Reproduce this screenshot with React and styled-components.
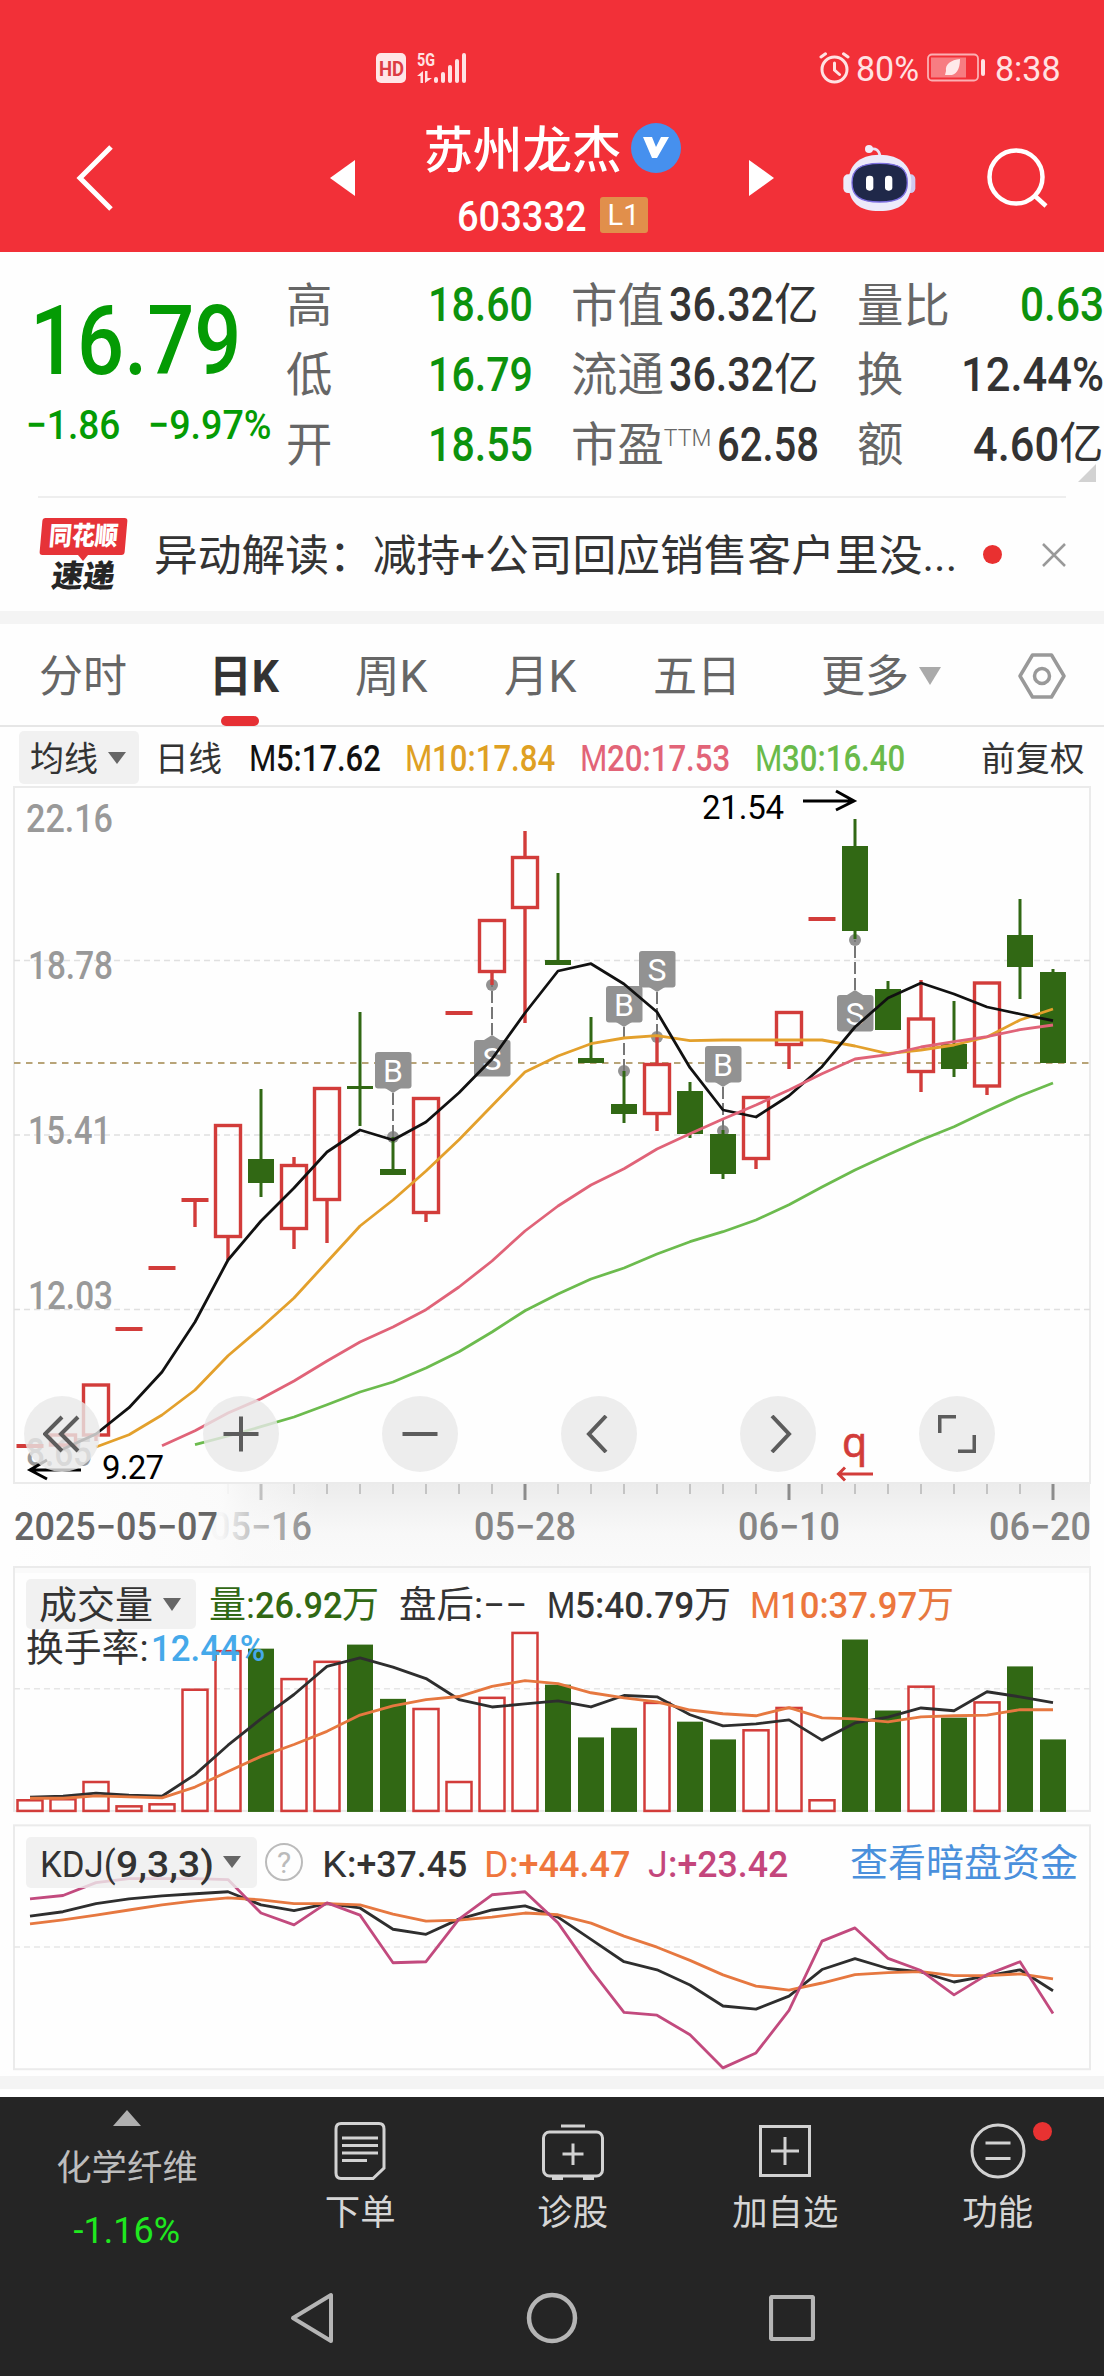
import React, { useLayoutEffect, useRef, useState } from "react";
import styled, { createGlobalStyle } from "styled-components";

const GlobalStyle = createGlobalStyle`
  * {
    box-sizing: border-box;
  }
  body {
    margin: 0;
    background-color: #fefefe;
    font-family: Roboto, "Noto Sans CJK SC", sans-serif;
    color: #333;
  }
  svg {
    display: block;
    flex-shrink: 0;
  }
`;

const RED = "#d23c3a";
const GREEN = "#316814";
const FONT = 'Roboto, "Noto Sans CJK SC", sans-serif';

/* ---------- condensed text ---------- */

const FitBox = styled.span`
  display: inline-block;
  flex-shrink: 0;
  width: ${(p) => p.$w}px;
  margin-left: ${(p) => p.$ml || 0}px;
  padding-top: 4px;
  font-size: ${(p) => p.$size}px;
  font-weight: ${(p) => p.$weight || 400};
  color: ${(p) => p.$color || "inherit"};
  line-height: 1.2;
  white-space: pre;
`;

const FitText = styled.span`
  display: inline-block;
  transform-origin: left center;
`;

// squeezes the text horizontally to the given width
const Fit = ({ w, ml, size, weight, color, children }) => {
  const ref = useRef(null);
  const [scale, setScale] = useState(1);
  useLayoutEffect(() => {
    setScale(w / ref.current.offsetWidth);
  }, [w, children]);
  return (
    <FitBox $w={w} $ml={ml} $size={size} $weight={weight} $color={color}>
      <FitText ref={ref} style={{ transform: `scaleX(${scale})` }}>
        {children}
      </FitText>
    </FitBox>
  );
};

/* ---------- header ---------- */

const Page = styled.div`
  width: 1104px;
  height: 2376px;
  overflow: hidden;
  display: flex;
  flex-direction: column;
`;

const Header = styled.header`
  height: 252px;
  flex-shrink: 0;
  background-color: #f23038;
  color: white;
`;

const StatusBar = styled.div`
  height: 96px;
  padding: 40px 43px 0 376px;
  display: flex;
  align-items: center;
  color: #ffe2e3;
`;

const HdBadge = styled.div`
  width: 30px;
  height: 30px;
  padding-bottom: 3px;
  border-radius: 5px;
  background-color: #ffe6e7;
  color: #dd3c43;
  display: flex;
  align-items: center;
  justify-content: center;
`;

const Signal = styled.svg`
  margin-left: 10px;
  overflow: visible;
`;

const StatusRight = styled.div`
  margin-left: auto;
  display: flex;
  align-items: center;
`;

const NavBar = styled.div`
  height: 156px;
  padding: 7px 0 0 75px;
  display: flex;
  align-items: center;
`;

const Spacer = styled.div`
  width: ${(p) => p.$w}px;
  flex-shrink: 0;
`;

const TitleBlock = styled.div`
  width: 258px;
  height: 110px;
  display: flex;
  flex-direction: column;
  align-items: center;
  justify-content: space-between;
`;

const TitleRow = styled.div`
  display: flex;
  align-items: center;
  height: ${(p) => p.$h}px;
`;

const StockName = styled.h1`
  margin: 0;
  padding-top: 7px;
  font-size: 49.5px;
  font-weight: 500;
  line-height: 50px;
`;

const Verified = styled.span`
  width: 50px;
  height: 50px;
  margin-left: 9px;
  border-radius: 50%;
  background-color: #4690ee;
  display: flex;
  align-items: center;
  justify-content: center;
`;

const Level = styled.span`
  width: 48px;
  height: 36px;
  margin-left: 13px;
  border-radius: 3px;
  background-color: #e18f4b;
  display: flex;
  align-items: center;
  justify-content: center;
  font-size: 29px;
`;

const Robot = () => (
  <svg width="73" height="68" viewBox="131 309 219 204">
    <path
      d="M212 325 Q238 318 242 345"
      stroke="#e9e2f6"
      strokeWidth="8"
      fill="none"
    />
    <circle cx="209" cy="324" r="12" fill="#f2ecfa" />
    <rect x="132" y="400" width="40" height="56" rx="14" fill="#eeebfa" />
    <rect x="308" y="400" width="40" height="56" rx="14" fill="#cfc9ef" />
    <path
      d="M240 341 C305 341 336 375 336 425 C336 485 300 510 240 510 C180 510 147 485 147 425 C147 375 178 341 240 341 Z"
      fill="#eceafa"
    />
    <path
      d="M241 367 C305 367 324 385 324 425 C324 465 300 483 241 483 C182 483 158 465 158 425 C158 385 182 367 241 367 Z"
      fill="#1f2849"
      stroke="#7c6fe0"
      strokeWidth="4"
    />
    <rect x="200" y="404" width="22" height="45" rx="10" fill="#fff" />
    <rect x="257" y="404" width="22" height="45" rx="10" fill="#fff" />
  </svg>
);

const TopHeader = () => (
  <Header>
    <StatusBar>
      <HdBadge>
        <Fit w={25} size={20} weight={700}>
          HD
        </Fit>
      </HdBadge>
      <Signal width="53" height="32" viewBox="-1 0 53 32" fill="#ffe2e3">
        <text
          x="0"
          y="14"
          fontSize="18"
          fontWeight="700"
          fontFamily="Roboto"
          textLength="18"
          lengthAdjust="spacingAndGlyphs"
        >
          5G
        </text>
        <path d="M0 24 L6 19 V31 H3.5 V24 Z M8 19 H10.500 V26 H15 L8 31 Z" />
        <rect x="17" y="25" width="4" height="6" rx="2" />
        <rect x="24" y="20" width="4" height="11" rx="2" />
        <rect x="31" y="13" width="4" height="18" rx="2" />
        <rect x="38" y="7" width="4" height="24" rx="2" />
        <rect x="45" y="1" width="4" height="30" rx="2" />
      </Signal>
      <StatusRight>
        <svg
          width="32"
          height="32"
          viewBox="0 0 32 32"
          fill="none"
          stroke="#ffe2e3"
          strokeWidth="3"
          strokeLinecap="round"
        >
          <circle cx="15.500" cy="17.500" r="12.500" />
          <path d="M15.500 11 V18 L20.500 22.500 M2 5 L6.500 1.800 M29 5 L24.500 1.800" />
        </svg>
        <Fit ml={5} w={63} size={34.500}>
          80%
        </Fit>
        <Spacer $w={8} />
        <svg width="60" height="30" viewBox="0 0 60 30">
          <rect
            x="1"
            y="1.500"
            width="50"
            height="26"
            rx="4"
            fill="none"
            stroke="#fbb0b3"
            strokeWidth="1.800"
          />
          <rect x="4" y="4.500" width="35" height="20" fill="#f77d82" />
          <path
            d="M33 6 C24 7 18 11 19 18 L18 22 L21 22 C28 23 33 18 33 6 Z"
            fill="#ffe9ea"
          />
          <rect x="54" y="6" width="4" height="17" rx="2" fill="#ffe2e3" />
        </svg>
        <Fit ml={8} w={66} size={34.500}>
          8:38
        </Fit>
      </StatusRight>
    </StatusBar>
    <NavBar>
      <svg width="40" height="68" viewBox="0 0 40 68">
        <path
          d="M36 3 L5 34 L36 65"
          fill="none"
          stroke="#fff"
          strokeWidth="5"
        />
      </svg>
      <Spacer $w={215} />
      <svg width="25" height="36" viewBox="0 0 25 36">
        <path d="M25 0 V36 L0 18 Z" fill="#fff" />
      </svg>
      <Spacer $w={68} />
      <TitleBlock>
        <TitleRow $h={50}>
          <StockName>苏州龙杰</StockName>
          <Verified>
            <svg width="28" height="22" viewBox="0 0 28 22">
              <path
                d="M1 0 H10 L14 10 L19 0 H27 L15 21 H10 Z"
                fill="#fff"
              />
            </svg>
          </Verified>
        </TitleRow>
        <TitleRow $h={36}>
          <Fit w={130} size={43} weight={500}>
            603332
          </Fit>
          <Level>L1</Level>
        </TitleRow>
      </TitleBlock>
      <Spacer $w={68} />
      <svg width="25" height="36" viewBox="0 0 25 36">
        <path d="M0 0 V36 L25 18 Z" fill="#fff" />
      </svg>
      <Spacer $w={69} />
      <Robot />
      <Spacer $w={71} />
      <svg width="62" height="60" viewBox="0 0 62 60">
        <circle
          cx="29"
          cy="29"
          r="26.500"
          fill="none"
          stroke="#fff"
          strokeWidth="4.500"
        />
        <path d="M48 48 L59 58" stroke="#fff" strokeWidth="4.500" />
      </svg>
    </NavBar>
  </Header>
);

/* ---------- quote ---------- */

const Quote = styled.section`
  height: 244px;
  flex-shrink: 0;
  display: flex;
  position: relative;
`;

const PriceBlock = styled.div`
  width: 286px;
  flex-shrink: 0;
  padding-top: 28px;
  color: #049b04;
`;

const PriceRow = styled.div`
  display: flex;
  align-items: center;
  height: ${(p) => p.$h}px;
`;

const Stats = styled.div`
  flex: 1;
  padding-top: 17px;
  display: grid;
  grid-template-columns: 247px 248px 247px;
  grid-auto-rows: 69.6px;
  column-gap: 38px;
`;

const Stat = styled.div`
  display: flex;
  align-items: center;
  color: #333;
  font-size: 46.4px;
  line-height: 60px;
`;

const StatLabel = styled.span`
  margin-right: auto;
  padding-top: 4px;
  color: #666;
  white-space: nowrap;
`;

const Ttm = styled.sup`
  font-size: 23px;
  font-weight: 300;
  line-height: 0;
  vertical-align: 15px;
`;

const Unit = styled.span`
  width: 45px;
  padding-top: 3px;
  font-size: 44.5px;
`;

const Corner = styled.svg`
  position: absolute;
  right: 8px;
  bottom: 14px;
`;

const UP = "#0d920d";
const stats = [
  { label: "高", value: "18.60", w: 105, color: UP },
  { label: "市值", value: "36.32", w: 105, unit: "亿" },
  { label: "量比", value: "0.63", w: 84, color: UP },
  { label: "低", value: "16.79", w: 105, color: UP },
  { label: "流通", value: "36.32", w: 105, unit: "亿" },
  { label: "换", value: "12.44%", w: 143 },
  { label: "开", value: "18.55", w: 105, color: UP },
  { label: "市盈", ttm: true, value: "62.58", w: 102 },
  { label: "额", value: "4.60", w: 86, unit: "亿" },
];

const Divider = styled.div`
  height: 2px;
  flex-shrink: 0;
  margin: 0 38px;
  background-color: #eeeeee;
`;

const QuotePanel = () => (
  <Quote>
    <PriceBlock>
      <PriceRow $h={118}>
        <Fit ml={30} w={211} size={97} weight={500}>
          16.79
        </Fit>
      </PriceRow>
      <PriceRow $h={52}>
        <Fit ml={26} w={94} size={41} weight={500}>
          −1.86
        </Fit>
        <Fit ml={28} w={124} size={41} weight={500}>
          −9.97%
        </Fit>
      </PriceRow>
    </PriceBlock>
    <Stats>
      {stats.map((s) => (
        <Stat key={s.label}>
          <StatLabel>
            {s.label}
            {s.ttm && <Ttm>TTM</Ttm>}
          </StatLabel>
          <Fit w={s.w} size={49} weight={500} color={s.color}>
            {s.value}
          </Fit>
          {s.unit && <Unit>{s.unit}</Unit>}
        </Stat>
      ))}
    </Stats>
    <Corner width="18" height="18" viewBox="0 0 18 18">
      <path d="M18 0 V18 H0 Z" fill="#d2d2d2" />
    </Corner>
  </Quote>
);

/* ---------- news ---------- */

const News = styled.section`
  height: 113px;
  flex-shrink: 0;
  padding-left: 39px;
  display: flex;
  align-items: center;
`;

const Logo = styled.div`
  width: 88px;
  height: 74px;
  display: flex;
  flex-direction: column;
  align-items: center;
`;

const LogoTag = styled.div`
  width: 85px;
  height: 37px;
  padding-bottom: 3px;
  border-radius: 3px;
  background-color: #e63338;
  color: white;
  transform: skewX(-5deg);
  display: flex;
  align-items: center;
  justify-content: center;
`;

const LogoTip = styled.div`
  border: 5px solid transparent;
  border-top: 6px solid #e63338;
  border-bottom: 0;
`;

const LogoSub = styled.div`
  height: 31px;
  padding-bottom: 4px;
  display: flex;
  align-items: center;
  transform: skewX(-8deg);
  color: #262626;
`;

const NewsText = styled.div`
  width: 801px;
  margin-left: 27px;
  padding-top: 2px;
  font-size: 43.75px;
  line-height: 60px;
  color: #333;
  white-space: nowrap;
`;

const RedDot = styled.span`
  width: 19px;
  height: 19px;
  border-radius: 50%;
  background-color: #e93030;
`;

const Band = styled.div`
  height: 13px;
  flex-shrink: 0;
  background-color: #f4f4f4;
`;

const NewsBar = () => (
  <News>
    <Logo>
      <LogoTag>
        <Fit w={69} size={26} weight={900}>
          同花顺
        </Fit>
      </LogoTag>
      <LogoTip />
      <LogoSub>
        <Fit w={63} size={31} weight={900}>
          速递
        </Fit>
      </LogoSub>
    </Logo>
    <NewsText>异动解读：减持+公司回应销售客户里没...</NewsText>
    <Spacer $w={28} />
    <RedDot />
    <Spacer $w={40} />
    <svg width="24" height="24" viewBox="0 0 24 24">
      <path
        d="M1 1 L23 23 M23 1 L1 23"
        stroke="#999"
        strokeWidth="2.500"
        fill="none"
      />
    </svg>
  </News>
);

/* ---------- tabs ---------- */

const Tabs = styled.nav`
  height: 103px;
  flex-shrink: 0;
  padding-left: 39px;
  border-bottom: 2px solid #e6e6e6;
  display: flex;
`;

const Tab = styled.div`
  position: relative;
  height: 101px;
  margin-left: ${(p) => p.$ml || 0}px;
  display: flex;
  align-items: center;
  padding-top: 2px;
  font-size: 44px;
  line-height: 1.2;
  color: ${(p) => (p.$active ? "#333" : "#666")};
  font-weight: ${(p) => (p.$active ? 700 : 400)};
`;

const TabText = styled.span`
  padding-top: 4px;
`;

const TabMark = styled.span`
  position: absolute;
  left: 12px;
  bottom: -1px;
  width: 38px;
  height: 10px;
  border-radius: 5px;
  background-color: #e63034;
`;

const Caret = styled.span`
  border: ${(p) => p.$s}px solid transparent;
  border-top: ${(p) => p.$h}px solid ${(p) => p.$color || "#666"};
  border-bottom: 0;
  margin-left: ${(p) => p.$ml || 0}px;
`;

const TabBar = () => (
  <Tabs>
    <Tab>
      <TabText>分时</TabText>
    </Tab>
    <Tab $ml={82} $active>
      <Fit w={70} size={44} weight={700}>
        日K
      </Fit>
      <TabMark />
    </Tab>
    <Tab $ml={76}>
      <Fit w={73} size={44}>
        周K
      </Fit>
    </Tab>
    <Tab $ml={76}>
      <Fit w={73} size={44}>
        月K
      </Fit>
    </Tab>
    <Tab $ml={76}>
      <TabText>五日</TabText>
    </Tab>
    <Tab $ml={80}>
      <TabText>更多</TabText>
      <Caret $s={11} $h={18} $ml={10} $color="#aaa" />
    </Tab>
    <Tab $ml={77}>
      <svg
        width="48"
        height="46"
        viewBox="0 0 48 46"
        fill="none"
        stroke="#999"
        strokeWidth="3.500"
      >
        <path
          d="M14.500 2 H33.500 L46 23 L33.500 44 H14.500 L2 23 Z"
          strokeLinejoin="round"
        />
        <circle cx="24" cy="23" r="7.500" />
      </svg>
    </Tab>
  </Tabs>
);

/* ---------- indicator rows ---------- */

const MaRow = styled.div`
  height: 59px;
  flex-shrink: 0;
  padding: 2px 0 0 19px;
  display: flex;
  align-items: center;
`;

const Pill = styled.div`
  width: ${(p) => p.$w}px;
  height: ${(p) => p.$h}px;
  padding-left: ${(p) => p.$pl}px;
  border-radius: 5px;
  background-color: rgba(238, 238, 238, 0.8);
  display: flex;
  align-items: center;
`;

// thin letter followed by medium digits
const Figure = ({ ml, lead, leadW = 27, w, size = 36, color, children }) => (
  <>
    <Fit ml={ml} w={leadW} size={size} color={color}>
      {lead}
    </Fit>
    <Fit w={w} size={size} weight={500} color={color}>
      {children}
    </Fit>
  </>
);

const AverageRow = () => (
  <MaRow>
    <Pill $w={120} $h={53} $pl={11}>
      <Fit w={68} size={34.500}>
        均线
      </Fit>
      <Caret $ml={10} $s={9} $h={12} />
    </Pill>
    <Fit ml={16} w={67} size={34.500}>
      日线
    </Fit>
    <Figure ml={27} lead="M" w={105} color="#111">
      5:17.62
    </Figure>
    <Figure ml={24} lead="M" w={123} color="#dfa023">
      10:17.84
    </Figure>
    <Figure ml={25} lead="M" w={123} color="#e26478">
      20:17.53
    </Figure>
    <Figure ml={25} lead="M" w={123} color="#6aba4a">
      30:16.40
    </Figure>
    <Fit ml={76} w={104} size={34.500}>
      前复权
    </Fit>
  </MaRow>
);

/* ---------- candles ---------- */

const cx = (i) => 30 + 33 * i;

// [up, high, bodyTop, bodyBottom, low]
const candles = [
  [1, 1446, 1446, 1446, 1446],
  [1, 1434, 1435, 1445, 1447],
  [1, 1385, 1385, 1435, 1441],
  [1, 1329, 1329, 1329, 1329],
  [1, 1268, 1268, 1268, 1268],
  [1, 1200, 1200, 1200, 1227],
  [1, 1125.5, 1125.5, 1236.5, 1260],
  [0, 1089, 1159, 1183, 1197],
  [1, 1157, 1165.5, 1228.5, 1249],
  [1, 1088.5, 1088.5, 1199.5, 1243],
  [0, 1012, 1086, 1089, 1126],
  [0, 1137, 1169, 1175, 1175],
  [1, 1098.5, 1098.5, 1212.5, 1222],
  [1, 1013, 1013, 1013, 1013],
  [1, 920.5, 920.5, 971.5, 985],
  [1, 831, 857.5, 907.5, 1023],
  [0, 873, 960, 965, 965],
  [0, 1017, 1058, 1063, 1063],
  [0, 1071, 1104, 1114, 1123],
  [1, 1037, 1064.5, 1113.5, 1131],
  [0, 1082, 1091, 1134, 1138],
  [0, 1130, 1134, 1174, 1179],
  [1, 1097.5, 1097.5, 1158.5, 1169],
  [1, 1012.5, 1012.5, 1044.5, 1069],
  [1, 919, 919, 919, 919],
  [0, 819, 846, 931, 939],
  [0, 981, 989, 1030, 1030],
  [1, 980, 1019, 1071.5, 1092],
  [0, 1001, 1044, 1069, 1077],
  [1, 983, 983, 1086, 1095],
  [0, 899, 935, 967, 999],
  [0, 969, 972, 1063, 1063],
];

const averages = [
  {
    color: "#e3a02c",
    from: 2,
    ys: [
      1447, 1434.7, 1415, 1390, 1355.7, 1327.7, 1298, 1262, 1226, 1200, 1171,
      1139.7, 1105.7, 1072, 1056, 1043.7, 1038, 1035.7, 1040.7, 1040, 1040,
      1040, 1040, 1046, 1053.7, 1050, 1045, 1037, 1020, 1009,
    ],
  },
  {
    color: "#111",
    from: 1,
    ys: [
      1449, 1434, 1407.7, 1372, 1322, 1260, 1221, 1188, 1152, 1130, 1140, 1122,
      1092.7, 1059, 1013, 971, 963.7, 984, 1012, 1067.7, 1110, 1117, 1095.7,
      1066.7, 1027, 998, 983, 994, 1007, 1014, 1020.7,
    ],
  },
  {
    color: "#e06378",
    from: 4,
    ys: [
      1445.7, 1430.7, 1413, 1398.7, 1381, 1361, 1342, 1327, 1309.7, 1287, 1261,
      1231, 1206, 1185, 1168.7, 1149, 1133.7, 1119, 1105, 1090, 1073.7, 1059,
      1054.7, 1047, 1041.7, 1036.7, 1029.7, 1025,
    ],
  },
  {
    color: "#6cbb4e",
    from: 5,
    ys: [
      1444.7, 1436, 1426.7, 1417, 1404.7, 1392, 1382, 1368, 1351.7, 1332,
      1310.7, 1294, 1279, 1268, 1254, 1241.7, 1231.7, 1220, 1204.7, 1187, 1170,
      1154.7, 1140, 1126.7, 1111, 1096, 1083,
    ],
  },
];

// box: top of the letter box, dot: y of the price it points to
const trades = [
  { i: 11, side: "B", box: 1052, dot: 1137 },
  { i: 14, side: "S", box: 1040, dot: 985 },
  { i: 18, side: "B", box: 986, dot: 1071 },
  { i: 19, side: "S", box: 951, dot: 1037 },
  { i: 21, side: "B", box: 1046, dot: 1131 },
  { i: 25, side: "S", box: 995, dot: 940 },
];

const Line = ({ from = 0, ys, color, width = 2.8 }) => (
  <polyline
    points={ys.map((y, k) => `${cx(from + k)},${y}`).join(" ")}
    fill="none"
    stroke={color}
    strokeWidth={width}
    strokeLinejoin="round"
  />
);

const Candle = ({ x, data }) => {
  const [up, high, top, bottom, low] = data;
  if (!up) {
    return (
      <g fill={GREEN}>
        <rect x={x - 1.5} y={high} width="3" height={low - high} />
        <rect x={x - 13} y={top} width="26" height={bottom - top} />
      </g>
    );
  }
  return (
    <g stroke={RED} strokeWidth="3.4" fill="none">
      {top === bottom ? (
        <path d={`M${x - 13.5} ${top} H${x + 13.5}`} strokeWidth="4" />
      ) : (
        <rect x={x - 12.5} y={top} width="25" height={bottom - top} />
      )}
      <path d={`M${x} ${high} V${top} M${x} ${bottom} V${low}`} />
    </g>
  );
};

const Trade = ({ i, side, box, dot }) => {
  const x = cx(i);
  const below = box > dot;
  const edge = below ? box : box + 36;
  const tip = below ? box - 5 : box + 41;
  return (
    <g fill="#929292">
      <circle cx={x} cy={dot} r="6" />
      <path
        d={`M${x} ${tip} V${dot}`}
        stroke="#777"
        strokeWidth="2"
        strokeDasharray="12 4"
      />
      <rect x={x - 18} y={box} width="36.500" height="36.500" rx="3" />
      <path d={`M${x - 8} ${edge} L${x} ${tip} L${x + 8} ${edge} Z`} />
      <text
        x={x}
        y={box + 29.5}
        fill="#fff"
        fontSize="32"
        fontFamily="Roboto"
        textAnchor="middle"
      >
        {side}
      </text>
    </g>
  );
};

const AxisText = ({ x, y, w, color = "#999", children }) => (
  <text
    x={x}
    y={y}
    textLength={w}
    lengthAdjust="spacingAndGlyphs"
    fontSize="38"
    fontWeight="500"
    fontFamily={FONT}
    fill={color}
  >
    {children}
  </text>
);

const ChartWrap = styled.div`
  position: relative;
  flex-shrink: 0;
  height: ${(p) => p.$h}px;
`;

const Controls = styled.div`
  position: absolute;
  left: 24px;
  bottom: 12px;
  display: flex;
  gap: 103px;
`;

const RoundButton = styled.button`
  width: 76px;
  height: 76px;
  padding: 0;
  border: none;
  border-radius: 50%;
  background-color: rgba(232, 232, 232, 0.8);
  display: flex;
  align-items: center;
  justify-content: center;
`;

const controls = [
  "M19 2 L2 19 L19 36 M35 2 L18 19 L35 36",
  "M1.500 19 H36.500 M19 1.500 V36.500",
  "M1.500 19 H36.500",
  "M26 1 L9 19 L26 37",
  "M13 1 L30 19 L13 37",
  "M1.500 18 V1.500 H18 M20 36.500 H36.500 V20",
];

const priceLabels = [
  ["22.16", 26, 832, 87],
  ["18.78", 28, 979, 85],
  ["15.41", 28, 1144, 83],
  ["12.03", 28, 1309, 85],
  ["8.65", 26, 1466, 66],
];

const PriceChart = () => (
  <ChartWrap $h={698}>
    <svg width="1104" height="698" viewBox="0 786 1104 698">
      <rect
        x="14"
        y="787"
        width="1076"
        height="696"
        fill="none"
        stroke="#ebebeb"
        strokeWidth="2"
      />
      <path
        d="M14 960.500 H1090 M14 1135 H1090 M14 1309.500 H1090"
        stroke="#e0e0e0"
        strokeWidth="1.300"
        strokeDasharray="6 4"
      />
      <path
        d="M14 1063 H1090"
        stroke="#b8a478"
        strokeWidth="2"
        strokeDasharray="6.500 5.500"
      />
      {priceLabels.map(([t, x, y, w]) => (
        <AxisText key={t} x={x} y={y} w={w}>
          {t}
        </AxisText>
      ))}
      {trades.map((t) => (
        <Trade key={t.i} {...t} />
      ))}
      {candles.map((c, i) => (
        <Candle key={i} x={cx(i)} data={c} />
      ))}
      {averages.map((a) => (
        <Line key={a.color} {...a} />
      ))}
      <g fontFamily="Roboto" fontSize="33" fill="#000">
        <text x="702" y="819" textLength="82">
          21.54
        </text>
        <text x="102" y="1479" textLength="62">
          9.27
        </text>
      </g>
      <path
        d="M803 801 H853 M836 791 L854 801 L836 810 M30 1470 H81 M47 1460 L30 1470 L47 1479"
        stroke="#000"
        strokeWidth="3"
        fill="none"
      />
      <text
        x="842"
        y="1457"
        fontSize="41"
        fontFamily="Noto Sans"
        fill={RED}
        stroke={RED}
        strokeWidth="0.6"
      >
        q
      </text>
      <path
        d="M873 1474 H839 M845 1467.500 L838.500 1474 L845 1480.500"
        stroke={RED}
        strokeWidth="3"
        fill="none"
      />
    </svg>
    <Controls>
      {controls.map((d) => (
        <RoundButton key={d}>
          <svg width="38" height="38" viewBox="0 0 38 38">
            <path d={d} fill="none" stroke="#5c5c5c" strokeWidth="4" />
          </svg>
        </RoundButton>
      ))}
    </Controls>
  </ChartWrap>
);

const ticks = Array.from({ length: 26 }, (_, k) => k + 6);

const TimeAxis = () => (
  <svg width="1104" height="82" viewBox="0 1484 1104 82">
    <defs>
      <linearGradient id="strip" x1="0" y1="0" x2="0" y2="1">
        <stop offset="0" stopColor="#ececec" />
        <stop offset="0.6" stopColor="#f8f8f8" />
        <stop offset="1" stopColor="#fafafa" />
      </linearGradient>
      <linearGradient id="fade" x1="0" y1="0" x2="1" y2="0">
        <stop offset="0" stopColor="#fefefe" />
        <stop offset="0.68" stopColor="#fbfbfb" stopOpacity="0.96" />
        <stop offset="0.76" stopColor="#fafafa" stopOpacity="0.6" />
        <stop offset="1" stopColor="#fafafa" stopOpacity="0" />
      </linearGradient>
    </defs>
    <rect x="14" y="1484" width="1076" height="82" fill="url(#strip)" />
    {ticks.map((i) =>
      i % 8 === 7 ? (
        <path
          key={i}
          d={`M${cx(i)} 1484 V1500`}
          stroke="#8c8c8c"
          strokeWidth="3"
        />
      ) : (
        <path
          key={i}
          d={`M${cx(i)} 1484 V1494`}
          stroke="#c4c4c4"
          strokeWidth="2"
        />
      )
    )}
    <AxisText x={210} y={1540} w={102} color="#858585">
      05−16
    </AxisText>
    <AxisText x={474} y={1540} w={102} color="#858585">
      05−28
    </AxisText>
    <AxisText x={738} y={1540} w={102} color="#858585">
      06−10
    </AxisText>
    <AxisText x={989} y={1540} w={102} color="#858585">
      06−20
    </AxisText>
    <rect x="13" y="1484" width="307" height="82" fill="url(#fade)" />
    <AxisText x={14} y={1540} w={204} color="#666">
      2025−05−07
    </AxisText>
  </svg>
);

/* ---------- volume ---------- */

const volumes = [
  1797, 1796, 1779, 1803, 1801, 1688, 1650, 1647.5, 1677.5, 1660.5, 1643.5,
  1697, 1707, 1779, 1696, 1632, 1683, 1735, 1725.5, 1701, 1719.5, 1737, 1728,
  1706, 1797, 1638.5, 1708.5, 1685, 1715.5, 1700.5, 1665, 1737,
];

const volumeLines = [
  {
    color: "#2e2e2e",
    ys: [
      1794, 1793, 1790, 1792, 1793, 1771.7, 1742.7, 1716.7, 1692.7, 1665,
      1656.7, 1665.7, 1677, 1697.7, 1705, 1702, 1699, 1705, 1693.7, 1695,
      1712.7, 1723.7, 1721.7, 1717.7, 1737.7, 1720.7, 1715, 1706, 1708.7, 1690,
      1695, 1700.7,
    ],
  },
  {
    color: "#e67840",
    ys: [
      1795, 1795, 1792.7, 1793.7, 1794.7, 1784, 1768.7, 1753.7, 1742, 1729,
      1713, 1704, 1697.7, 1694.7, 1684.7, 1679, 1682, 1691, 1696, 1700, 1708,
      1711.7, 1713.7, 1705.7, 1715.7, 1716.7, 1719.7, 1714.7, 1713.7, 1713,
      1707.7, 1707.7,
    ],
  },
];

const PanelHead = styled.div`
  position: absolute;
  left: 26px;
  top: ${(p) => p.$top}px;
  height: 50px;
  display: flex;
  align-items: center;
`;

const VolumePanel = () => (
  <ChartWrap $h={258}>
    <svg
      width="1104"
      height="258"
      viewBox="0 1566 1104 254.4"
      preserveAspectRatio="none"
    >
      <rect x="14" y="1567" width="1076" height="6" fill="#fafafa" />
      <rect
        x="14"
        y="1567"
        width="1076"
        height="240.500"
        fill="none"
        stroke="#ebebeb"
        strokeWidth="2"
      />
      <path
        d="M14 1687 H1090"
        stroke="#e6e6e6"
        strokeWidth="1.500"
        strokeDasharray="6 4"
      />
      {volumes.map((y, i) =>
        candles[i][0] ? (
          <rect
            key={i}
            x={cx(i) - 12.5}
            y={y}
            width="25"
            height={1807.5 - y}
            fill="none"
            stroke={RED}
            strokeWidth="2.500"
          />
        ) : (
          <rect
            key={i}
            x={cx(i) - 13}
            y={y}
            width="26"
            height={1808.5 - y}
            fill={GREEN}
          />
        )
      )}
      {volumeLines.map((l) => (
        <Line key={l.color} {...l} />
      ))}
    </svg>
    <PanelHead $top={13}>
      <Pill $w={170} $h={50} $pl={13}>
        <Fit w={114} size={38}>
          成交量
        </Fit>
        <Caret $ml={10} $s={9} $h={13} />
      </Pill>
      <Fit ml={13} w={46} size={37} color={GREEN}>
        量:
      </Fit>
      <Fit w={87} size={37} weight={500} color={GREEN}>
        26.92
      </Fit>
      <Fit w={37} size={37} color={GREEN}>
        万
      </Fit>
      <Fit ml={20} w={84} size={37}>
        盘后:
      </Fit>
      <Fit w={44} size={37}>
        −−
      </Fit>
      <Figure ml={20} lead="M" leadW={28} w={119} size={37}>
        5:40.79
      </Figure>
      <Fit w={37} size={37}>
        万
      </Fit>
      <Figure
        ml={19}
        lead="M"
        leadW={30}
        w={137}
        size={37}
        color="#ec763d"
      >
        10:37.97
      </Figure>
      <Fit w={37} size={37} color="#e67840">
        万
      </Fit>
    </PanelHead>
    <PanelHead $top={55}>
      <Fit w={123} size={37.500}>
        换手率:
      </Fit>
      <Fit ml={2} w={114} size={37.500} weight={500} color="#45a9ea">
        12.44%
      </Fit>
    </PanelHead>
  </ChartWrap>
);

/* ---------- kdj ---------- */

const kdj = [
  {
    color: "#2e2e2e",
    ys: [
      1911, 1906.7, 1898.7, 1894, 1891, 1889, 1887, 1900, 1905.7, 1898.7, 1903,
      1924, 1929, 1914, 1905, 1901, 1912, 1934, 1956, 1964, 1979, 1999.7,
      2002.7, 1990, 1963.7, 1953, 1962.7, 1966, 1976, 1970, 1964, 1984.7,
    ],
  },
  {
    color: "#e67840",
    ys: [
      1918.7, 1914.7, 1910, 1905, 1900, 1896, 1893, 1895, 1898.7, 1898.7, 1900,
      1909, 1916, 1915, 1912, 1908, 1909.7, 1918, 1930.7, 1941.7, 1954.7, 1969,
      1980, 1984, 1977, 1968.7, 1966.7, 1965.7, 1969.7, 1969.7, 1968, 1973,
    ],
  },
  {
    color: "#c24a7e",
    ys: [
      1894, 1890.7, 1878, 1874, 1874, 1874, 1875, 1908, 1919.7, 1898, 1910,
      1957, 1956, 1914, 1890, 1887, 1917.7, 1964, 2006, 2008.7, 2028, 2060.7,
      2046, 2004, 1935.7, 1922.7, 1952.7, 1964.7, 1988.7, 1968.7, 1956, 2007,
    ],
  },
];

const Help = styled.span`
  width: 38px;
  height: 38px;
  margin-left: 8px;
  border: 2px solid #bbb;
  border-radius: 50%;
  color: #bbb;
  font-size: 30px;
  display: flex;
  align-items: center;
  justify-content: center;
`;

const KdjPanel = () => (
  <ChartWrap $h={252}>
    <svg
      width="1104"
      height="252"
      viewBox="0 1820.2 1104 248.5"
      preserveAspectRatio="none"
    >
      <rect
        x="14"
        y="1821.500"
        width="1076"
        height="240.500"
        fill="none"
        stroke="#ebebeb"
        strokeWidth="2"
      />
      <path
        d="M14 1941.500 H1090"
        stroke="#e6e6e6"
        strokeWidth="1.500"
        strokeDasharray="6 4"
      />
      {kdj.map((l) => (
        <Line key={l.color} {...l} />
      ))}
    </svg>
    <PanelHead $top={13}>
      <Pill $w={231} $h={51} $pl={14}>
        <Fit w={76} size={37.500}>
          KDJ(
        </Fit>
        <Fit w={98} size={37.500} weight={500}>
          9,3,3)
        </Fit>
        <Caret $ml={9} $s={9} $h={12} />
      </Pill>
      <Help>?</Help>
      <Figure ml={19} lead="K" leadW={25} w={120} size={37.500}>
        :+37.45
      </Figure>
      <Figure
        ml={17}
        lead="D"
        leadW={25}
        w={121}
        size={37.500}
        color="#ef763d"
      >
        :+44.47
      </Figure>
      <Figure
        ml={18}
        lead="J"
        leadW={20}
        w={120}
        size={37.500}
        color="#c4467c"
      >
        :+23.42
      </Figure>
      <Fit ml={62} w={228} size={38} color="#4a90dc">
        查看暗盘资金
      </Fit>
    </PanelHead>
  </ChartWrap>
);

/* ---------- bottom ---------- */

const Bottom = styled.footer`
  margin-top: 8px;
  height: 279px;
  flex-shrink: 0;
  background-color: #252525;
  color: #d6d6d6;
`;

const Menu = styled.div`
  height: 166px;
  display: grid;
  grid-template-columns: 254px repeat(4, 212.5px);
`;

const MenuItem = styled.div`
  display: flex;
  flex-direction: column;
  align-items: center;
  padding-top: ${(p) => p.$pt}px;
  font-size: 35.4px;
  line-height: 44px;
`;

const Sector = styled.div`
  margin-top: 20px;
  color: #bdbdbd;
`;

const Change = styled.div`
  margin-top: 16px;
  color: #1fe81f;
`;

const IconBox = styled.div`
  position: relative;
  height: 58px;
  margin-bottom: 11px;
  display: flex;
  align-items: center;
`;

const Badge = styled.span`
  position: absolute;
  right: -26px;
  top: 0;
  width: 19px;
  height: 19px;
  border-radius: 50%;
  background-color: #e83232;
`;

const SystemNav = styled.div`
  height: 109px;
  padding: 0 289px 0 290px;
  display: flex;
  align-items: center;
  justify-content: space-between;
`;

const Icon = ({ w, h, children }) => (
  <svg
    width={w}
    height={h}
    viewBox={`0 0 ${w} ${h}`}
    fill="none"
    stroke="#d2d2d2"
    strokeWidth="3"
  >
    {children}
  </svg>
);

const BottomBar = () => (
  <Bottom>
    <Menu>
      <MenuItem $pt={13}>
        <svg width="28" height="16" viewBox="0 0 28 16">
          <path d="M14 0 L28 16 H0 Z" fill="#b0b0b0" />
        </svg>
        <Sector>化学纤维</Sector>
        <Change>
          <Fit w={107} size={36}>
            -1.16%
          </Fit>
        </Change>
      </MenuItem>
      <MenuItem $pt={25}>
        <IconBox>
          <Icon w={52} h={58}>
            <path d="M7 1.500 H45 Q50 1.500 50 7 V46 L39 56.500 H7 Q2 56.500 2 51 V7 Q2 1.500 7 1.500 Z" />
            <path d="M8 16 H44 M8 23.500 H44 M8 31 H44 M8 38.500 H33" />
          </Icon>
        </IconBox>
        下单
      </MenuItem>
      <MenuItem $pt={25}>
        <IconBox>
          <Icon w={62} h={58}>
            <rect x="1.500" y="10" width="59" height="44" rx="6" />
            <path d="M19 4 H43 M31 21.500 V43 M20.500 32 H41.500" />
            <path d="M10 56 H21 M41 56 H52" strokeWidth="4" />
          </Icon>
        </IconBox>
        诊股
      </MenuItem>
      <MenuItem $pt={25}>
        <IconBox>
          <Icon w={52} h={52}>
            <rect x="1.500" y="1.500" width="49" height="49" />
            <path d="M12 26 H40 M26 12 V40" />
          </Icon>
        </IconBox>
        加自选
      </MenuItem>
      <MenuItem $pt={25}>
        <IconBox>
          <Icon w={56} h={56}>
            <circle cx="28" cy="28" r="26" />
            <path d="M15.500 20 H40.500 M15.500 35.500 H40.500" />
          </Icon>
          <Badge />
        </IconBox>
        功能
      </MenuItem>
    </Menu>
    <SystemNav>
      <svg width="44" height="52" viewBox="0 0 44 52">
        <path
          d="M41 3 V49 L3 26 Z"
          fill="none"
          stroke="#b5b5b5"
          strokeWidth="4"
          strokeLinejoin="round"
        />
      </svg>
      <svg width="52" height="52" viewBox="0 0 52 52">
        <circle
          cx="26"
          cy="26"
          r="23"
          fill="none"
          stroke="#b5b5b5"
          strokeWidth="4.500"
        />
      </svg>
      <svg width="46" height="46" viewBox="0 0 46 46">
        <rect
          x="2"
          y="2"
          width="42"
          height="42"
          rx="1"
          fill="none"
          stroke="#b5b5b5"
          strokeWidth="4.200"
        />
      </svg>
    </SystemNav>
  </Bottom>
);

const App = () => {
  return (
    <Page>
      <GlobalStyle />
      <TopHeader />
      <QuotePanel />
      <Divider />
      <NewsBar />
      <Band />
      <TabBar />
      <AverageRow />
      <PriceChart />
      <TimeAxis />
      <VolumePanel />
      <KdjPanel />
      <Band />
      <BottomBar />
    </Page>
  );
};

export default App;
